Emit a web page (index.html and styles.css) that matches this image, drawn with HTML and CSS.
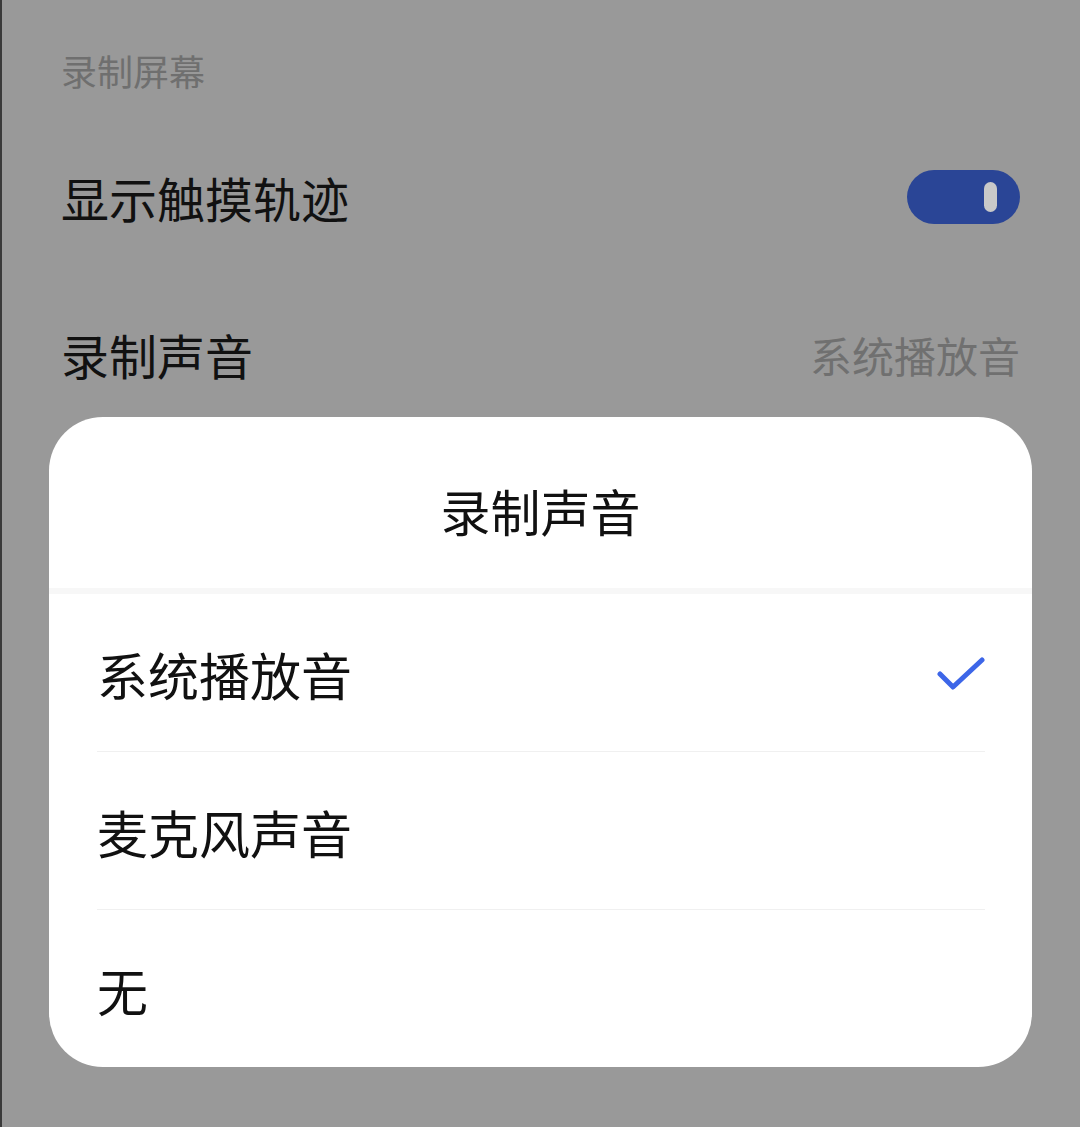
FILE: index.html
```html
<!DOCTYPE html>
<html lang="zh">
<head>
<meta charset="utf-8">
<link rel="stylesheet" href="styles.css">
</head>
<body>
<div class="page">
  <div class="section-title">录制屏幕</div>
  <div class="row row-toggle">
    <span class="label">显示触摸轨迹</span>
    <span class="toggle"><span class="thumb"></span></span>
  </div>
  <div class="row row-value">
    <span class="label">录制声音</span>
    <span class="value">系统播放音</span>
  </div>

  <div class="dialog">
    <div class="dialog-title">录制声音</div>
    <div class="band"></div>
    <div class="options">
      <div class="option">
        <span>系统播放音</span>
        <svg class="check" width="48" height="34" viewBox="0 0 48 34">
          <polyline points="3,17 16,30 45,3" fill="none" stroke="#3d66e8" stroke-width="5" stroke-linecap="round" stroke-linejoin="round"/>
        </svg>
      </div>
      <div class="option"><span>麦克风声音</span></div>
      <div class="option last"><span>无</span></div>
    </div>
  </div>
</div>
</body>
</html>
```
FILE: styles.css
```css
html, body {
  margin: 0;
  padding: 0;
}
body {
  width: 1080px;
  height: 1127px;
  background: #999999;
  font-family: "Noto Sans CJK SC", "Noto Sans", sans-serif;
  overflow: hidden;
}
.page {
  position: relative;
  height: 1127px;
  box-sizing: border-box;
  border-left: 2px solid #3a3a3a;
  padding: 0 60px 0 59px;
}
.section-title {
  height: 140px;
  line-height: 140px;
  font-size: 36px;
  color: #6f6f6f;
}
.row {
  display: flex;
  align-items: center;
  justify-content: space-between;
}
.row-toggle {
  height: 114px;
}
.row-value {
  height: 200px;
}
.label {
  font-size: 48px;
  color: #111111;
}
.value {
  font-size: 42px;
  color: #707070;
}
.toggle {
  display: flex;
  align-items: center;
  justify-content: flex-end;
  width: 113px;
  height: 54px;
  border-radius: 27px;
  background: #2a4596;
  box-sizing: border-box;
  padding-right: 23px;
}
.thumb {
  width: 13px;
  height: 30px;
  border-radius: 7px;
  background: #c9c9c9;
}
.dialog {
  position: absolute;
  left: 47px;
  top: 417px;
  width: 983px;
  height: 650px;
  background: #ffffff;
  border-radius: 54px;
  overflow: hidden;
}
.dialog-title {
  height: 171px;
  box-sizing: border-box;
  padding-top: 14px;
  text-align: center;
  font-size: 50px;
  color: #111111;
  display: flex;
  align-items: center;
  justify-content: center;
}
.band {
  height: 6px;
  background: #f7f7f7;
}
.options {
  padding: 0 47px 0 48px;
}
.option {
  height: 158px;
  box-sizing: border-box;
  border-bottom: 1px solid #f0f0f0;
  display: flex;
  align-items: center;
  justify-content: space-between;
  padding-top: 2px;
  font-size: 51px;
  color: #111111;
}
.option.last {
  border-bottom: none;
}
.check {
  display: block;
}
```
